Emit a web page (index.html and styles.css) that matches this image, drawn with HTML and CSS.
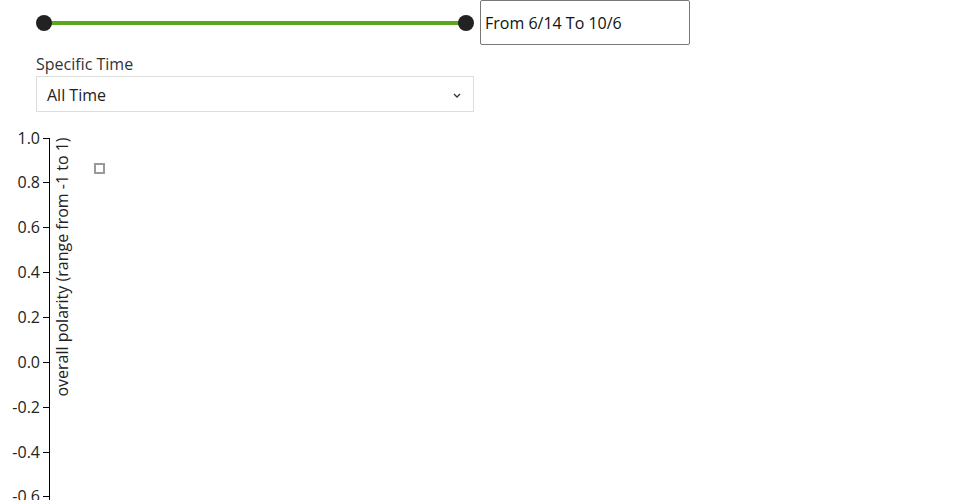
FILE: index.html
```html
<!DOCTYPE html>
<html>
<head>
    <title>Polarity</title>
    <link rel="stylesheet" href="styles.css">
</head>
<body>
    <div class="range-row">
        <div class="slider">
            <div class="track"></div>
            <span class="handle handle-left"></span>
            <span class="handle handle-right"></span>
        </div>
        <input class="range-text" type="text" value="From 6/14 To 10/6">
    </div>

    <label class="field-label">Specific Time</label>
    <div class="select-box">
        <span>All Time</span>
        <svg class="chevron" width="8" height="5" viewBox="0 0 8 5">
            <path d="M1 1 L4 4 L7 1" fill="none" stroke="#333" stroke-width="1.3"/>
        </svg>
    </div>

    <svg class="chart" width="960" height="380">
        <g class="axis">
            <line x1="49.5" y1="18" x2="49.5" y2="380"/>
            <line x1="43" y1="18.5" x2="49.5" y2="18.5"/>
            <line x1="43" y1="62.5" x2="49.5" y2="62.5"/>
            <line x1="43" y1="107.5" x2="49.5" y2="107.5"/>
            <line x1="43" y1="152.5" x2="49.5" y2="152.5"/>
            <line x1="43" y1="197.5" x2="49.5" y2="197.5"/>
            <line x1="43" y1="242.5" x2="49.5" y2="242.5"/>
            <line x1="43" y1="287.5" x2="49.5" y2="287.5"/>
            <line x1="43" y1="332.5" x2="49.5" y2="332.5"/>
            <line x1="43" y1="376.5" x2="49.5" y2="376.5"/>
        </g>
        <g class="tick-labels">
            <text x="40" y="18.5" dy="0.35em">1.0</text>
            <text x="40" y="62.5" dy="0.35em">0.8</text>
            <text x="40" y="107.5" dy="0.35em">0.6</text>
            <text x="40" y="152.5" dy="0.35em">0.4</text>
            <text x="40" y="197.5" dy="0.35em">0.2</text>
            <text x="40" y="242.5" dy="0.35em">0.0</text>
            <text x="40" y="287.5" dy="0.35em">-0.2</text>
            <text x="40" y="332.5" dy="0.35em">-0.4</text>
            <text x="40" y="376.5" dy="0.35em">-0.6</text>
        </g>
        <text class="axis-title" transform="rotate(-90)" x="-147" y="68">overall polarity (range from -1 to 1)</text>
        <rect class="point" x="95" y="44" width="9" height="9"/>
    </svg>
</body>
</html>
```

FILE: styles.css
```css
body { margin: 0; font-family: "Open Sans", sans-serif; color: #222; }

.range-row { display: flex; align-items: center; padding-left: 36px; height: 45px; }
.slider { position: relative; width: 438px; height: 16px; }
.track { position: absolute; left: 8px; right: 8px; top: 6px; height: 4px; background: #5ba61f; }
.handle { position: absolute; top: 0; width: 16px; height: 16px; border-radius: 50%; background: #222; }
.handle-left { left: 0; }
.handle-right { right: 0; }
.range-text { box-sizing: border-box; margin-left: 6px; width: 210px; height: 45px; padding: 0 4px; border: 1px solid #777; border-radius: 2px; font: 16px "Open Sans", sans-serif; color: #111; }

.field-label { display: block; margin: 8px 0 0 36px; font-size: 16px; color: #333; line-height: 23px; }
.select-box { position: relative; box-sizing: border-box; margin-left: 36px; width: 438px; height: 36px; padding: 2px 10px 0; border: 1px solid #ddd; display: flex; align-items: center; font-size: 16px; color: #222; }
.chevron { position: absolute; right: 12px; top: 16px; }

.chart { display: block; margin-top: 8px; }
.axis line { stroke: #000; stroke-width: 1; shape-rendering: crispEdges; }
.tick-labels text { font-family: "Open Sans", sans-serif; font-size: 16px; fill: #222; text-anchor: end; }
.axis-title { font-family: "Open Sans", sans-serif; font-size: 16px; fill: #222; text-anchor: middle; }
.point { fill: none; stroke: #999; stroke-width: 2; }
```
